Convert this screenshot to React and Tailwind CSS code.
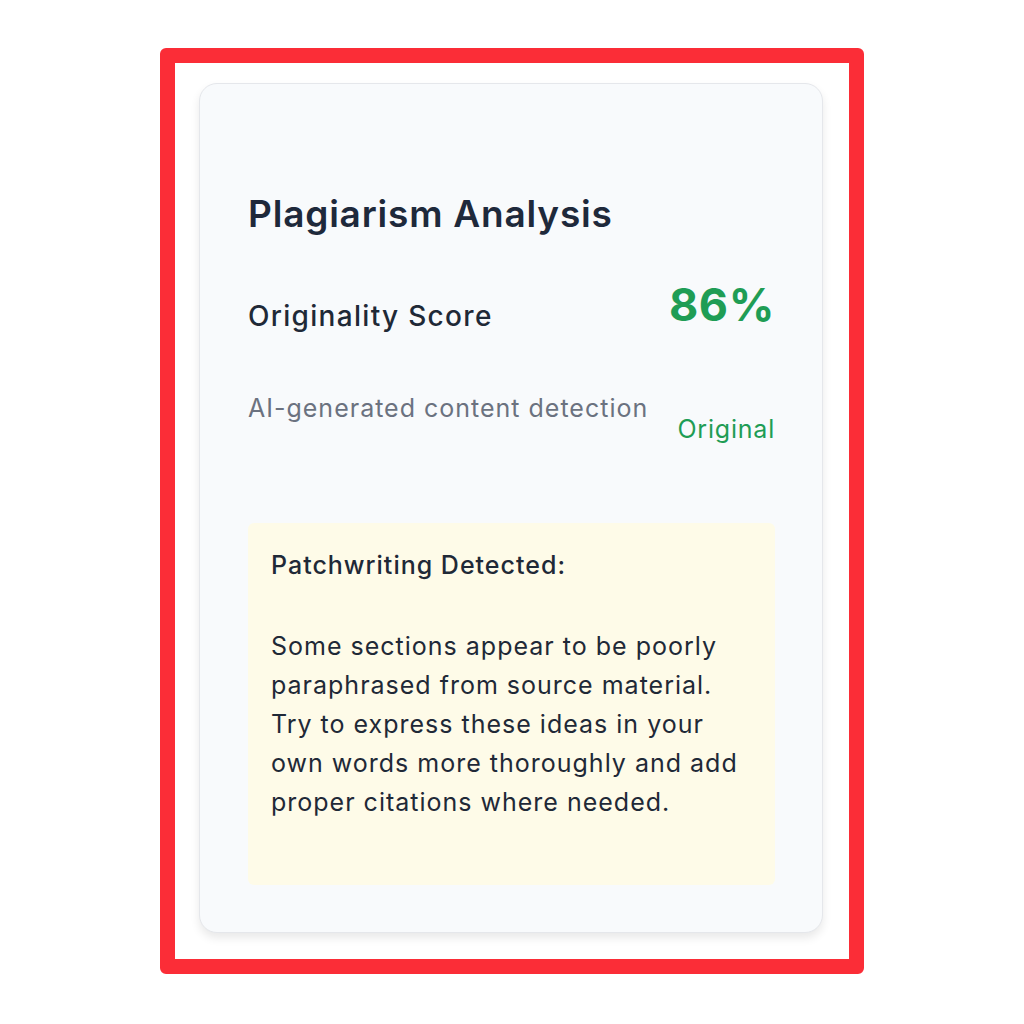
export default function App() {
  return (
    <div className="w-[1024px] h-[1024px] bg-white flex justify-center pt-[48px]" style={{ fontFamily: "Inter, 'Noto Sans', sans-serif" }}>
      <div className="w-[704px] h-[926px] border-[15px] border-[#fb2d37] rounded-[6px] pt-[20px] pl-[24px]">
        {/* analysis card */}
        <div className="w-[624px] h-[850px] rounded-[18px] border border-[#e5e7eb] bg-[#f8fafc] shadow-[0_5px_10px_rgba(0,0,0,0.09)] pl-[48px] pr-[47px] pt-[110px]">
          <h2 className="text-[37px] leading-[40px] font-semibold text-[#1e293b] tracking-[0.8px]">Plagiarism Analysis</h2>

          <div className="mt-[44px] flex justify-between">
            <div className="flex flex-col">
              <div className="mt-[18px] text-[28px] leading-[40px] font-medium text-[#1f2937] tracking-[1.3px]">Originality Score</div>
              <div className="mt-[54px] text-[25px] leading-[36px] text-[#6b7280] tracking-[1px]">AI-generated content detection</div>
            </div>
            <div className="flex flex-col items-end">
              <div className="text-[45px] leading-[54px] font-bold text-[#1f9d55] tracking-[0.6px]">86%</div>
              <div className="mt-[79px] text-[25px] leading-[36px] text-[#1f9d55] tracking-[0.8px]">Original</div>
            </div>
          </div>

          <div className="mt-[76px] h-[362px] rounded-[6px] bg-[#fefbe8] pl-[23px] pr-[20px] pt-[23px] text-[25px] text-[#1f2937] tracking-[1px]">
            <div className="leading-[39px] font-medium">Patchwriting Detected:</div>
            <p className="mt-[42px] leading-[39px]">
              Some sections appear to be poorly paraphrased from source material. Try to express these ideas in your own words more thoroughly and add proper citations where needed.
            </p>
          </div>
        </div>
      </div>
    </div>
  );
}
